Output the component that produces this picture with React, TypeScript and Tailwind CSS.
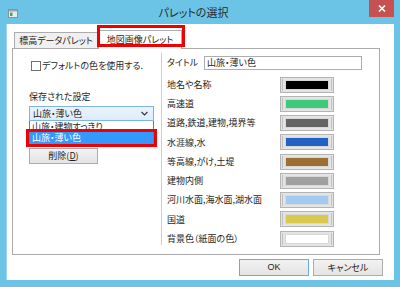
import * as React from "react";

const swatches = [
  { label: "地名や名称", color: "#000000" },
  { label: "高速道", color: "#3fc97b" },
  { label: "道路,鉄道,建物,境界等", color: "#646464" },
  { label: "水涯線,水", color: "#2262c4" },
  { label: "等高線,がけ,土堤", color: "#9c7035" },
  { label: "建物内側", color: "#a0a0a0" },
  { label: "河川水面,海水面,湖水面", color: "#a2caf2" },
  { label: "国道", color: "#d9c94f" },
  { label: "背景色（紙面の色）", color: "#ffffff" },
];

function AppIcon() {
  return (
    <svg width="10" height="9" viewBox="0 0 10 9">
      <rect x="0.5" y="0.5" width="9" height="8" fill="#e8ecef" stroke="#8a9299" />
      <rect x="1" y="1" width="8" height="1.5" fill="#9aa6b0" />
      <rect x="2" y="3.5" width="2.5" height="3.5" fill="#4aa360" />
    </svg>
  );
}

function ColorButton({ color }: { color: string }) {
  return (
    <div className="flex h-[16px] w-[54px] items-center border border-[#b4b4b4] bg-[#e4e4e4] px-[1px]">
      <div className="flex h-[12px] w-full items-center border-x border-[#c0c0c0] px-[2px]">
        <div
          className="h-[10px] w-full border border-[#d8d8d8]"
          style={{ backgroundColor: color }}
        />
      </div>
    </div>
  );
}

export default function App() {
  return (
    <div className="flex h-[287px] w-[400px] flex-col bg-[#6bc4e6] font-['Noto_Sans_CJK_JP','Noto_Sans',sans-serif] text-[9px] text-[#1e1e1e] [font-feature-settings:'palt']">
      {/* title bar */}
      <div className="relative flex h-[24px] items-start">
        <div className="ml-[8px] mt-[9px]">
          <AppIcon />
        </div>
        <div className="flex-1 pt-[5px] text-center text-[11px] leading-[15px] text-[#2a2a2a]">
          パレットの選択
        </div>
        <div className="mr-[6px] flex h-[17px] w-[25px] items-center justify-center bg-[#c75150]">
          <svg width="8" height="7" viewBox="0 0 8 7">
            <path d="M1 0.5 L7 6.5 M7 0.5 L1 6.5" stroke="#fff" strokeWidth="1.6" />
          </svg>
        </div>
      </div>

      {/* client area */}
      <div className="relative mx-[6px] mb-[7px] flex flex-1 flex-col border-l border-[#9fd6ee] bg-white px-[5px] pt-[3px]">
        {/* tabs */}
        <div className="flex h-[21px] items-end pl-[2px]">
          <div className="flex h-[16px] w-[84px] items-center justify-center border border-b-0 border-[#acacac] bg-[#f0f0f0] text-[9px]">
            標高データパレット
          </div>
          <div className="relative z-10 -mb-px flex h-[19px] w-[84px] items-center justify-center border border-b-0 border-[#acacac] bg-white pb-[1px] text-[9px]">
            地図画像パレット
          </div>
        </div>
        {/* highlight around tab */}
        <div className="pointer-events-none absolute left-[90px] top-[1px] z-20 h-[22px] w-[88px] border-[3px] border-[#ee0000]" />

        {/* panel */}
        <div className="flex h-[207px] w-[368px] border border-[#acacac]">
          {/* left */}
          <div className="flex w-[148px] flex-col pl-[16px]">
            <div className="mt-[12px] flex h-[10px] items-center">
              <div className="ml-[2px] h-[10px] w-[10px] border border-[#707070] bg-white" />
              <span className="ml-[1px] leading-[10px]">デフォルトの色を使用する.</span>
            </div>
            <div className="mt-[20px] leading-[12px]">保存された設定</div>
            <div className="relative mt-[3px]">
              <div className="flex h-[15px] w-[125px] items-center justify-between border border-[#7eb4ea] bg-gradient-to-b from-[#ecf4fc] to-[#dcecfc] pl-[3px] pr-[5px]">
                <span className="leading-[12px]">山旅・薄い色</span>
                <svg width="7" height="5" viewBox="0 0 7 5">
                  <path d="M0.5 1 L3.5 4 L6.5 1" fill="none" stroke="#333" strokeWidth="1.1" />
                </svg>
              </div>
              {/* open list */}
              <div className="absolute left-0 top-[15px] z-10 flex h-[26px] w-[125px] flex-col overflow-hidden border border-t-0 border-[#7a7a7a] bg-white">
                <div className="h-[10px] overflow-hidden pl-[2px] pt-[1px] leading-[9px]">山旅・建物すっきり</div>
                <div className="flex h-[13px] items-center bg-[#3399ff] pl-[2px] leading-[11px] text-white">山旅・薄い色</div>
              </div>
              {/* highlight around item */}
              <div className="pointer-events-none absolute left-[-3px] top-[23px] z-20 h-[18px] w-[131px] border-[3px] border-[#ee0000]" />
            </div>
            <div className="mt-[27px] flex h-[16px] w-[69px] items-center justify-center border border-[#acacac] bg-gradient-to-b from-[#f2f2f2] to-[#e4e4e4]">
              削除(<span className="underline">D</span>)
            </div>
          </div>

          {/* right */}
          <div className="mt-[4px] flex h-[192px] w-[218px] flex-col border-l border-[#cfcfcf] pl-[5px] pt-[3px]">
            <div className="flex h-[14px] items-center">
              <span className="w-[37px]">タイトル</span>
              <div className="flex h-[14px] w-[158px] items-center border border-[#abadb3] pl-[2px]">
                山旅・薄い色
              </div>
            </div>
            <div className="mt-[5px] flex flex-col">
              {swatches.map((s) => (
                <div key={s.label} className="flex h-[19.25px] items-center">
                  <span className="w-[113px] whitespace-nowrap">{s.label}</span>
                  <ColorButton color={s.color} />
                </div>
              ))}
            </div>
          </div>
        </div>

        {/* dialog buttons */}
        <div className="mt-[4px] flex justify-end gap-[4px] pr-[6px]">
          <div className="flex h-[17px] w-[70px] items-center justify-center border border-[#6ea8e0] bg-gradient-to-b from-[#f2f2f2] to-[#e4e4e4] font-['Liberation_Sans',sans-serif]">
            OK
          </div>
          <div className="flex h-[17px] w-[70px] items-center justify-center border border-[#acacac] bg-gradient-to-b from-[#f2f2f2] to-[#e4e4e4]">
            キャンセル
          </div>
        </div>
      </div>
    </div>
  );
}
